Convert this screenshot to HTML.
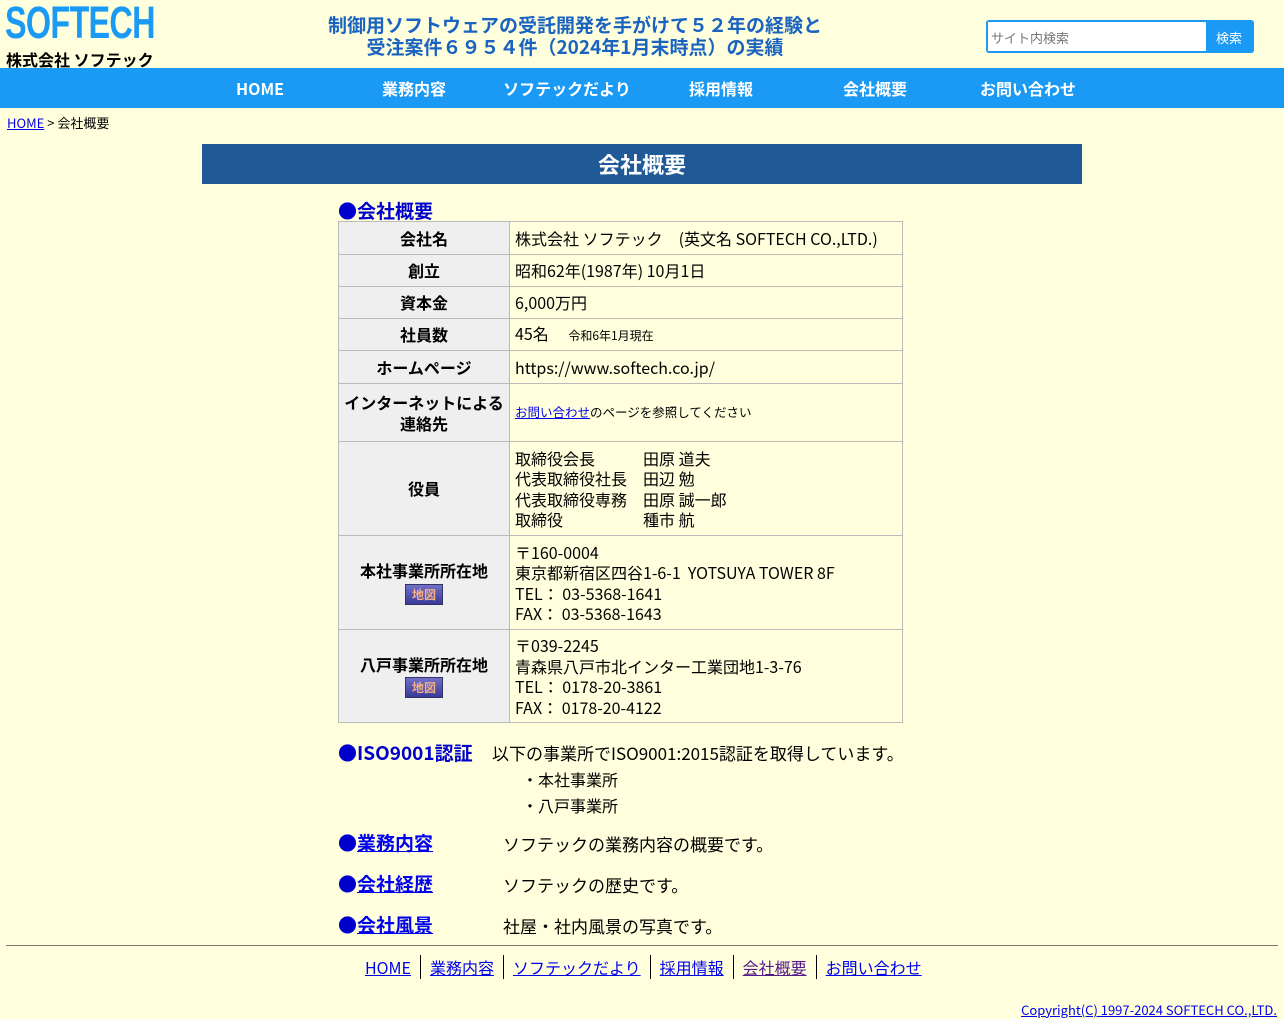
<!DOCTYPE html>
<html><head><meta charset="utf-8">
<style>
*{margin:0;padding:0;box-sizing:border-box}
body{width:1284px;height:1019px;background:#ffffdd;font-family:"Liberation Sans","Noto Sans CJK JP",sans-serif;color:#000;position:relative;overflow:hidden}
.a{position:absolute;white-space:nowrap}
.logo{left:5px;top:-3px;font-family:"Liberation Sans",sans-serif;font-weight:bold;font-size:45px;color:#1a9af5;letter-spacing:-1px;transform:scaleX(0.72);transform-origin:left}
.sub{left:6px;top:47px;font-size:16px;font-weight:bold;font-family:"Noto Sans CJK JP",sans-serif}
.catch{left:300px;width:550px;text-align:center;top:14px;font-size:19px;line-height:22px;font-weight:bold;color:#1a63c0;font-family:"Noto Sans CJK JP",sans-serif}
.search{left:986px;top:20px;width:268px;height:33px;background:#1a9af5;border-radius:3px}
.search .in{position:absolute;left:2px;top:2px;width:218px;height:29px;background:#fff;font-size:13px;color:#777;padding:6px 3px;font-family:"Noto Sans CJK JP",sans-serif}
.search .bt{position:absolute;left:230px;top:8px;color:#fff;font-size:13px;font-family:"Noto Sans CJK JP",sans-serif}
.nav{left:0;top:68px;width:1284px;height:40px;background:#1a9af5}
.nav span{position:absolute;top:8px;color:#fff;font-weight:bold;font-size:16px;font-family:"Noto Sans CJK JP",sans-serif;transform:translateX(-50%)}
.bc{left:7px;top:113px;font-size:13px;font-family:"Noto Sans CJK JP",sans-serif}
a{color:#0000ee}
.title{left:202px;top:144px;width:880px;height:40px;background:#1f5a96;color:#fff;font-size:22px;font-weight:bold;text-align:center;line-height:40px;font-family:"Noto Sans CJK JP",sans-serif}
.h{font-size:19px;font-weight:bold;color:#0000cc;font-family:"Noto Sans CJK JP",sans-serif}
table{position:absolute;left:338px;top:221px;border-collapse:collapse;font-family:"Noto Sans CJK JP",sans-serif;font-size:16px}
td{border:1px solid #bbb;padding:0 5px;line-height:20.5px}
td.l{width:171px;background:#efefef;text-align:center;font-weight:bold}
td.r{width:393px}
.map{display:inline-block;width:38px;height:21px;background:linear-gradient(#7070c8,#3a3a98);border:1px solid #336;color:#f8b088;font-size:12px;line-height:19px;font-weight:bold;margin-top:3px}
.txt{font-size:17px;font-family:"Noto Sans CJK JP",sans-serif}
.foot{left:365px;top:955px;font-size:16px;font-family:"Noto Sans CJK JP",sans-serif}
.foot a{padding:0 9px;border-left:1px solid #000}
.foot a:first-child{border:none;padding-left:0}
</style></head><body>
<div class="a logo">SOFTECH</div>
<div class="a sub">株式会社 ソフテック</div>
<div class="a catch">制御用ソフトウェアの受託開発を手がけて５２年の経験と<br>受注案件６９５４件（2024年1月末時点）の実績</div>
<div class="a search"><div class="in">サイト内検索</div><div class="bt">検索</div></div>
<div class="a nav"><span style="left:260px">HOME</span><span style="left:414px">業務内容</span><span style="left:567px">ソフテックだより</span><span style="left:721px">採用情報</span><span style="left:875px">会社概要</span><span style="left:1028px">お問い合わせ</span></div>
<div class="a bc"><a href="#">HOME</a> &gt; 会社概要</div>
<div class="a title">会社概要</div>
<div class="a h" style="left:338px;top:197px">●会社概要</div>
<table>
<tr style="height:33px"><td class="l">会社名</td><td class="r">株式会社 ソフテック　(英文名 SOFTECH CO.,LTD.)</td></tr>
<tr style="height:32px"><td class="l">創立</td><td class="r">昭和62年(1987年) 10月1日</td></tr>
<tr style="height:32px"><td class="l">資本金</td><td class="r">6,000万円</td></tr>
<tr style="height:32px"><td class="l">社員数</td><td class="r">45名　 <span style="font-size:12px">令和6年1月現在</span></td></tr>
<tr style="height:33px"><td class="l">ホームページ</td><td class="r">https://www.softech.co.jp/</td></tr>
<tr style="height:58px"><td class="l">インターネットによる<br>連絡先</td><td class="r" style="font-size:12.5px"><a href="#">お問い合わせ</a>のページを参照してください</td></tr>
<tr style="height:94px"><td class="l">役員</td><td class="r">取締役会長　　　田原 道夫<br>代表取締役社長　田辺 勉<br>代表取締役専務　田原 誠一郎<br>取締役　　　　　種市 航</td></tr>
<tr style="height:94px"><td class="l">本社事業所所在地<br><span class="map">地図</span></td><td class="r">〒160-0004<br>東京都新宿区四谷1-6-1&nbsp; YOTSUYA TOWER 8F<br>TEL： 03-5368-1641<br>FAX： 03-5368-1643</td></tr>
<tr style="height:93px"><td class="l">八戸事業所所在地<br><span class="map">地図</span></td><td class="r">〒039-2245<br>青森県八戸市北インター工業団地1-3-76<br>TEL： 0178-20-3861<br>FAX： 0178-20-4122</td></tr>
</table>
<div class="a h" style="left:338px;top:739px">●ISO9001認証</div>
<div class="a txt" style="left:492px;top:740px">以下の事業所でISO9001:2015認証を取得しています。</div>
<div class="a txt" style="left:522px;top:767px;font-size:16px">・本社事業所</div>
<div class="a txt" style="left:522px;top:793px;font-size:16px">・八戸事業所</div>
<div class="a h" style="left:338px;top:829px">●<a href="#">業務内容</a></div>
<div class="a txt" style="left:503px;top:831px">ソフテックの業務内容の概要です。</div>
<div class="a h" style="left:338px;top:870px">●<a href="#">会社経歴</a></div>
<div class="a txt" style="left:503px;top:872px">ソフテックの歴史です。</div>
<div class="a h" style="left:338px;top:911px">●<a href="#">会社風景</a></div>
<div class="a txt" style="left:503px;top:913px">社屋・社内風景の写真です。</div>
<div class="a" style="left:6px;top:945px;width:1272px;border-top:1px solid #777"></div>
<div class="a foot"><a href="#">HOME</a><a href="#">業務内容</a><a href="#">ソフテックだより</a><a href="#">採用情報</a><a href="#" style="color:#551a8b">会社概要</a><a href="#">お問い合わせ</a></div>
<div class="a" style="right:7px;top:1000px;font-size:13px;font-family:'Noto Sans CJK JP',sans-serif"><a href="#">Copyright(C) 1997-2024 SOFTECH CO.,LTD.</a></div>
</body></html>
